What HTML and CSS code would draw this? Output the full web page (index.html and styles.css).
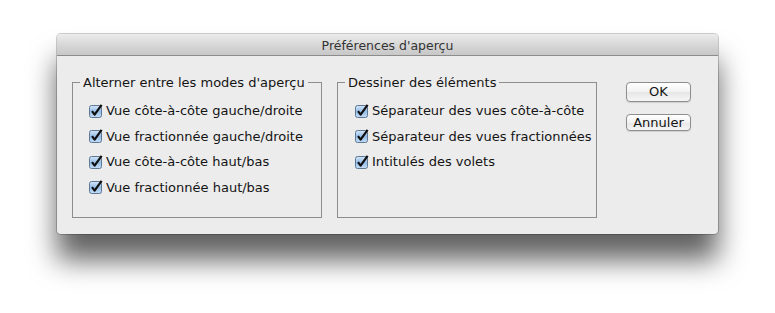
FILE: index.html
```html
<!DOCTYPE html>
<html lang="fr">
<head>
<meta charset="utf-8">
<title>Préférences d'aperçu</title>
<link rel="stylesheet" href="styles.css">
</head>
<body>
<div class="window">
  <div class="titlebar">Préférences d'aperçu</div>
  <div class="content">
    <fieldset class="group group-left">
      <legend>Alterner entre les modes d'aperçu</legend>
      <div class="row"><span class="cb"></span>Vue côte-à-côte gauche/droite</div>
      <div class="row"><span class="cb"></span>Vue fractionnée gauche/droite</div>
      <div class="row"><span class="cb"></span>Vue côte-à-côte haut/bas</div>
      <div class="row"><span class="cb"></span>Vue fractionnée haut/bas</div>
    </fieldset>
    <fieldset class="group group-right">
      <legend>Dessiner des éléments</legend>
      <div class="row"><span class="cb"></span>Séparateur des vues côte-à-côte</div>
      <div class="row"><span class="cb"></span>Séparateur des vues fractionnées</div>
      <div class="row"><span class="cb"></span>Intitulés des volets</div>
    </fieldset>
    <div class="buttons">
      <button class="btn btn-ok">OK</button>
      <button class="btn btn-cancel">Annuler</button>
    </div>
  </div>
</div>
</body>
</html>
```
FILE: styles.css
```css
html, body {
  margin: 0;
  padding: 0;
  background: #ffffff;
}
body {
  width: 775px;
  height: 313px;
  overflow: hidden;
  font-family: "DejaVu Sans", Verdana, sans-serif;
  font-size: 13px;
  color: #141414;
}
.window {
  margin: 34px 0 0 57px;
  width: 661px;
  height: 200px;
  background: #ececec;
  border-radius: 4px;
  box-shadow: 0 0 0 1px rgba(0,0,0,0.2), 0 26px 28px rgba(0,0,0,0.62);
  overflow: hidden;
}
.titlebar {
  height: 22px;
  box-sizing: border-box;
  border-bottom: 1px solid #8c8c8c;
  background: linear-gradient(#ececec, #d4d4d4 60%, #c8c8c8);
  text-align: center;
  line-height: 23px;
  font-size: 12.5px;
  color: #333333;
}
.content {
  display: flex;
  padding: 19px 0 0 15px;
}
.group {
  margin: 0;
  box-sizing: border-box;
  border: 1px solid #8d8d8d;
  padding: 8px 0 0 0;
  height: 143px;
}
.group-left { width: 250px; }
.group-right { width: 260px; margin-left: 15px; }
legend {
  padding: 0 3px;
  margin-left: 7px;
  font-size: 13px;
  line-height: 15px;
}
.row {
  display: flex;
  align-items: center;
  height: 25.5px;
  font-size: 13px;
  white-space: nowrap;
}
.group-left .row { padding-left: 16px; }
.group-right .row { padding-left: 17px; }
.cb {
  width: 14px;
  height: 14px;
  margin-right: 3px;
  flex: none;
  background: url("data:image/svg+xml;utf8,<svg xmlns='http://www.w3.org/2000/svg' width='14' height='14' viewBox='0 0 14 14'><defs><linearGradient id='g' x1='0' y1='0' x2='0' y2='1'><stop offset='0' stop-color='%23d6e6f8'/><stop offset='0.5' stop-color='%2394bde8'/><stop offset='1' stop-color='%23c5ddf6'/></linearGradient></defs><rect x='0.5' y='1.5' width='12' height='12' rx='2' fill='url(%23g)' stroke='%235f7894'/><path d='M3 7.2 L5.6 10.6 L12.6 0.8' fill='none' stroke='%23101010' stroke-width='2.2' stroke-linejoin='round'/></svg>") no-repeat;
}
.buttons {
  display: flex;
  flex-direction: column;
  align-items: flex-start;
  margin-left: 29px;
  padding-top: 7px;
}
.btn {
  width: 65px;
  box-sizing: border-box;
  border: 1px solid #8e8e8e;
  border-radius: 4px;
  background: linear-gradient(#ffffff, #f2f2f2 50%, #e6e6e6 51%, #f6f6f6);
  font-family: "DejaVu Sans", Verdana, sans-serif;
  font-size: 13px;
  color: #141414;
  padding: 0;
  box-shadow: 0 1px 1px rgba(0,0,0,0.12);
}
.btn-ok { height: 20px; line-height: 18px; }
.btn-cancel { height: 17px; line-height: 15px; margin-top: 12px; }
```
